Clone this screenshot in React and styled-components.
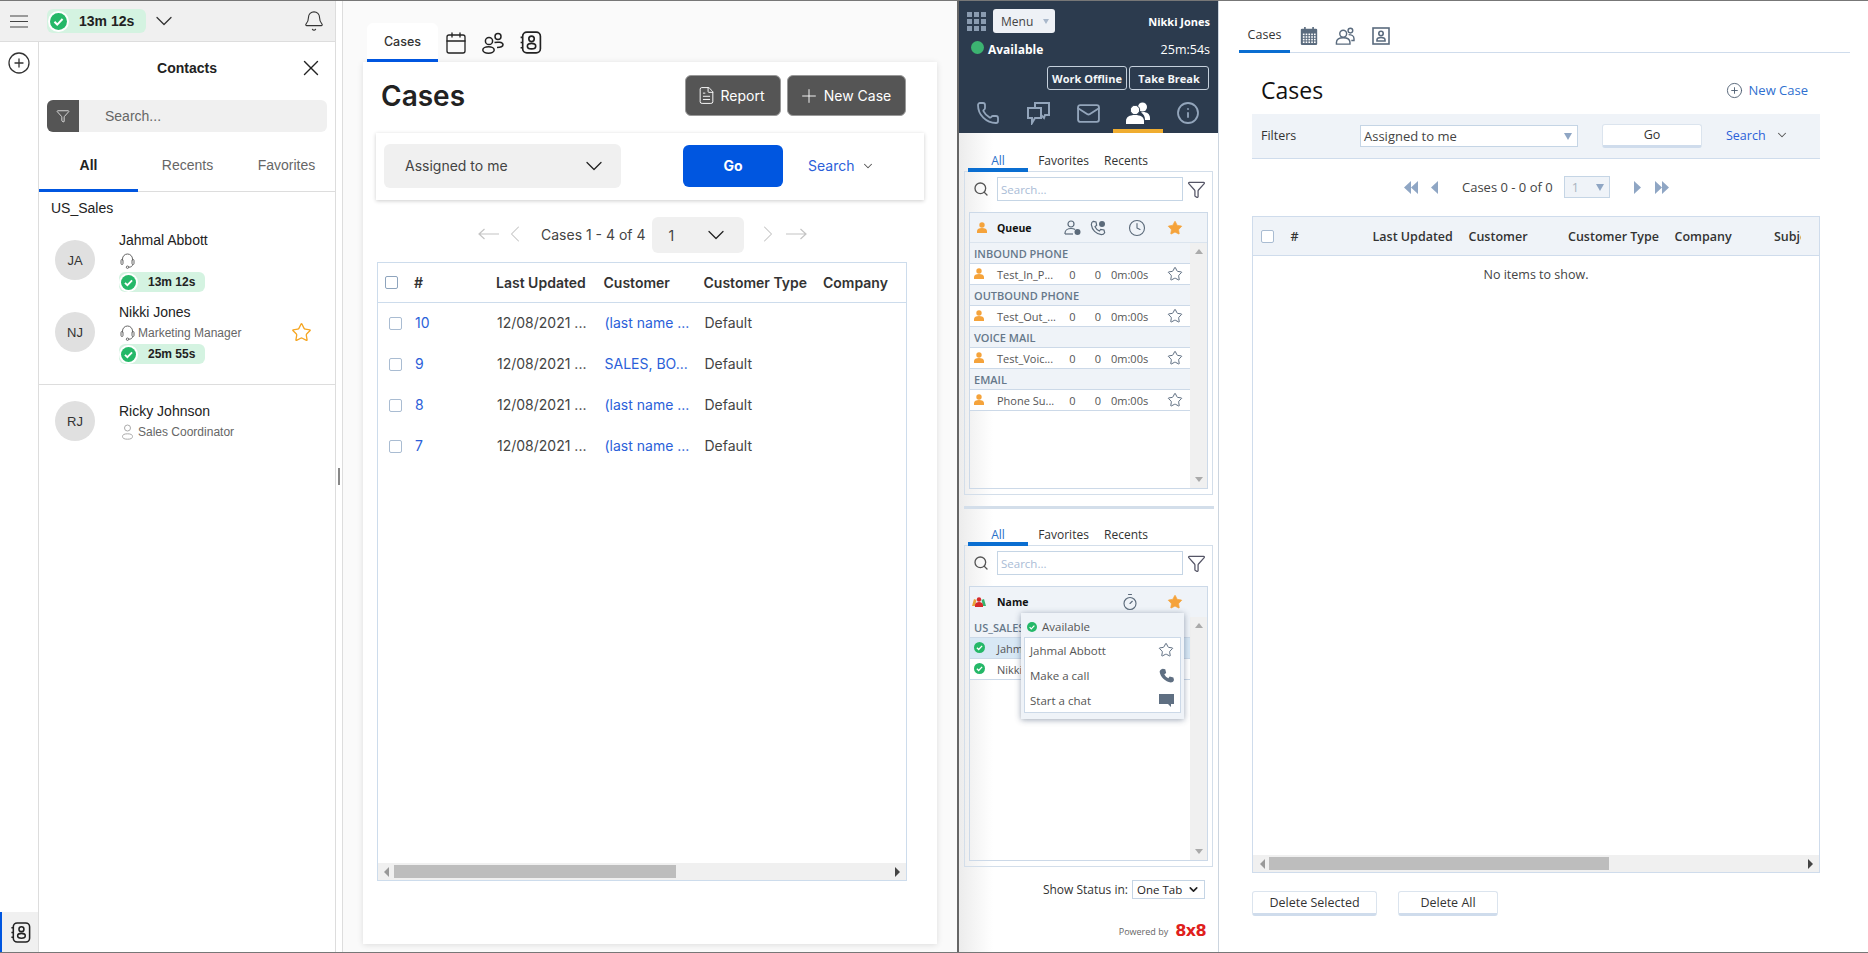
import React from "react";
import styled, { createGlobalStyle } from "styled-components";
import {
  ChevronDown,
  ChevronLeft,
  ChevronRight,
  Bell,
  CirclePlus,
  X,
  Funnel,
  Star,
  Calendar,
  FileText,
  Plus,
  Search as SearchIcon,
  Mail,
  Info,
  Phone,
  Clock,
  Timer,
} from "lucide-react";

const inter = `Inter, "Liberation Sans", sans-serif`;
const openSans = `"Open Sans", "Liberation Sans", sans-serif`;
const arial = `"Liberation Sans", Arial, sans-serif`;

const GlobalStyle = createGlobalStyle`
  html, body {
    margin: 0;
    padding: 0;
    background: #fff;
    overflow: hidden;
  }
  * {
    box-sizing: border-box;
  }
`;

const Page = styled.div`
  width: 1868px;
  height: 953px;
  display: flex;
  border-top: 1px solid #777;
  border-bottom: 1px solid #777;
  overflow: hidden;
  background: #fff;
`;

/* ---------- left contacts pane ---------- */

const LeftPane = styled.div`
  width: 336px;
  display: flex;
  flex-direction: column;
  border-right: 1px solid #ddd;
  font-family: ${arial};
  color: #222;
`;

const TopBar = styled.div`
  height: 41px;
  flex: none;
  display: flex;
  align-items: center;
  background: #f0f0f0;
  border-bottom: 1px solid #ddd;
  padding-left: 10px;
  color: #333;
`;

const Pill = styled.div`
  display: flex;
  align-items: center;
  background: #d4f3e1;
  border-radius: 6px;
  font-weight: bold;
  color: #222;
  overflow: hidden;
  width: ${(p) => (p.$small ? "86px" : "99px")};
  height: ${(p) => (p.$small ? "20px" : "24px")};
  font-size: ${(p) => (p.$small ? "12px" : "14px")};
  margin-left: ${(p) => (p.$small ? "0" : "19px")};
  margin-top: ${(p) => (p.$small ? "2px" : "0")};
  padding-left: ${(p) => (p.$small ? "2px" : "3px")};
`;

const PillCheck = styled.span`
  display: flex;
  border-radius: 50%;
  background: #fff;
  box-shadow: 0 0 0 2px #fff;
  margin-right: ${(p) => (p.$small ? "12px" : "12px")};
`;

const TopChevron = styled.span`
  display: flex;
  margin-left: 4px;
`;

const BellSlot = styled.div`
  margin-left: auto;
  margin-right: 10px;
  display: flex;
`;

const LeftBody = styled.div`
  flex: 1;
  display: flex;
  min-height: 0;
`;

const Rail = styled.div`
  width: 39px;
  flex: none;
  border-right: 1px solid #ddd;
  display: flex;
  flex-direction: column;
  align-items: center;
  padding-top: 9px;
`;

const RailFoot = styled.div`
  margin-top: auto;
  width: 100%;
  height: 40px;
  display: flex;
  align-items: center;
  justify-content: center;
  background: #f0f0f0;
  border-left: 2px solid #0056e0;
`;

const ContactsPanel = styled.div`
  flex: 1;
  min-width: 0;
`;

const ContactsHead = styled.div`
  height: 52px;
  display: flex;
  align-items: center;
  justify-content: center;
  position: relative;
  font-size: 14px;
  font-weight: bold;
`;

const CloseSlot = styled.div`
  position: absolute;
  right: 11px;
  top: 13px;
  display: flex;
`;

const SearchBox = styled.div`
  margin: 6px 0 0 8px;
  width: 280px;
  height: 32px;
  display: flex;
  border-radius: 6px;
  background: #f0f0f0;
  overflow: hidden;
`;

const FilterSquare = styled.div`
  width: 32px;
  display: flex;
  align-items: center;
  justify-content: center;
  background: #555;
  color: #fff;
`;

const SearchInput = styled.input`
  flex: 1;
  min-width: 0;
  border: none;
  background: transparent;
  padding: 0 0 0 26px;
  font-family: ${arial};
  font-size: 14px;
  outline: none;
  &::placeholder {
    color: #666;
    opacity: 1;
  }
`;

const ContactTabs = styled.div`
  margin-top: 13px;
  height: 47px;
  display: grid;
  grid-template-columns: repeat(3, 99px);
  border-bottom: 1px solid #ddd;
`;

const ContactTab = styled.div`
  display: flex;
  align-items: center;
  justify-content: center;
  font-size: 14px;
  padding-bottom: 5px;
  color: ${(p) => (p.$active ? "#222" : "#666")};
  font-weight: ${(p) => (p.$active ? "bold" : "normal")};
  border-bottom: 3px solid ${(p) => (p.$active ? "#0056e0" : "transparent")};
  margin-bottom: -1px;
`;

const GroupName = styled.div`
  font-size: 14px;
  line-height: 16px;
  padding: 8px 0 0 12px;
`;

const ContactRow = styled.div`
  display: flex;
  padding-left: 16px;
  margin-top: ${(p) => p.$top || 12}px;
`;

const Avatar = styled.div`
  width: 40px;
  height: 40px;
  flex: none;
  border-radius: 50%;
  background: #e0e0e0;
  display: flex;
  align-items: center;
  justify-content: center;
  font-size: 13px;
  color: #333;
  margin-top: ${(p) => (p.$compact ? "-2px" : "8px")};
`;

const ContactInfo = styled.div`
  margin-left: 24px;
`;

const ContactName = styled.div`
  font-size: 14px;
  line-height: 16px;
`;

const ContactMeta = styled.div`
  height: 20px;
  margin-top: ${(p) => (p.$compact ? "2px" : "2px")};
  padding-top: 2px;
  display: flex;
  align-items: center;
  gap: 3px;
  padding-left: 1px;
  font-size: 12px;
  color: #666;
`;

const FavSlot = styled.div`
  margin-left: auto;
  margin-right: 23px;
  margin-top: 18px;
  display: flex;
  color: #f5a623;
`;

const ContactDivider = styled.div`
  margin-top: 20px;
  height: 1px;
  background: #ddd;
`;

/* ---------- splitter ---------- */

const Splitter = styled.div`
  width: 7px;
  flex: none;
  display: flex;
  align-items: center;
  padding-left: 2px;
  border-right: 1px solid #ddd;
`;

const Grip = styled.div`
  width: 2px;
  height: 17px;
  background: #888;
`;

/* ---------- modern cases pane ---------- */

const CasesPane = styled.div`
  width: 616px;
  flex: none;
  background: #fafafa;
  border-right: 2px solid #666;
  font-family: ${inter};
  color: #333;
  padding-left: 20px;
`;

const PaneTabs = styled.div`
  height: 61px;
  padding: 22px 0 0 4px;
  display: flex;
  align-items: flex-start;
`;

const PaneTab = styled.div`
  width: 71px;
  height: 39px;
  padding-top: 1px;
  background: #fff;
  border-radius: 6px 6px 0 0;
  border-bottom: 3px solid #0056e0;
  display: flex;
  align-items: center;
  justify-content: center;
  font-size: 12.5px;
  font-weight: 500;
  color: #333;
`;

const PaneTabIcons = styled.div`
  display: flex;
  align-items: center;
  gap: 13px;
  margin: 7px 0 0 6px;
  color: #222;
`;

const Card = styled.div`
  width: 574px;
  height: 882px;
  background: #fff;
  box-shadow: 0 1px 6px rgba(0, 0, 0, 0.12);
  padding-top: 13px;
`;

const CardHead = styled.div`
  height: 41px;
  margin-left: 18px;
  width: 525px;
  display: flex;
  align-items: center;
`;

const CardTitle = styled.div`
  font-size: 28px;
  font-weight: 600;
  color: #222;
  margin-right: auto;
`;

const DarkButton = styled.div`
  height: 41px;
  width: ${(p) => p.$w}px;
  margin-left: 6px;
  padding-right: 4px;
  display: flex;
  align-items: center;
  justify-content: center;
  gap: 4px;
  background: #555;
  border: 1px solid #999;
  border-radius: 6px;
  color: #fff;
  font-size: 14px;
`;

const FilterCard = styled.div`
  margin: 17px 0 0 13px;
  width: 548px;
  height: 67px;
  padding-bottom: 2px;
  display: flex;
  align-items: center;
  background: #fff;
  box-shadow: 0 1px 4px rgba(0, 0, 0, 0.2);
`;

const SoftSelect = styled.div`
  margin-left: ${(p) => p.$ml || 0}px;
  width: ${(p) => p.$w}px;
  height: ${(p) => p.$h}px;
  display: flex;
  align-items: center;
  justify-content: space-between;
  padding: 0 ${(p) => p.$pr || 13}px 0 ${(p) => p.$pl || 21}px;
  background: #f0f0f0;
  border-radius: 6px;
  font-size: 14px;
  color: #444;
`;

const GoButton = styled.div`
  margin-left: 62px;
  width: 100px;
  height: 42px;
  display: flex;
  align-items: center;
  justify-content: center;
  background: #0056e0;
  border-radius: 6px;
  color: #fff;
  font-size: 14px;
  font-weight: 700;
`;

const BlueLink = styled.div`
  margin-left: ${(p) => p.$ml}px;
  margin-top: ${(p) => p.$mt || 0}px;
  display: flex;
  align-items: center;
  gap: ${(p) => p.$gap || 7}px;
  color: #2b5fd9;
  font-size: ${(p) => p.$size || 14}px;
`;

const Pager = styled.div`
  margin: 17px 0 0 115px;
  height: 36px;
  display: flex;
  align-items: center;
  font-size: 14px;
  color: #444;
`;

const PagerIcon = styled.span`
  display: flex;
  margin-left: ${(p) => p.$ml || 0}px;
  margin-top: -3px;
  color: #c4c4c4;
`;

const PagerText = styled.span`
  margin-left: ${(p) => p.$ml}px;
  margin-top: ${(p) => p.$mt || 0}px;
  white-space: nowrap;
`;

const CasesTable = styled.div`
  margin: 9px 0 0 14px;
  width: 530px;
  height: 619px;
  border: 1px solid #cddcec;
  display: flex;
  flex-direction: column;
`;

const casesColumns = "36px 82px 107.5px 100px 119.5px 1fr";

const CasesHeadRow = styled.div`
  height: 40px;
  flex: none;
  display: grid;
  grid-template-columns: ${casesColumns};
  align-items: center;
  border-bottom: 1px solid #cddcec;
  font-size: 14px;
  font-weight: 600;
  color: #333;
  white-space: nowrap;
`;

const CasesRow = styled.div`
  height: 41px;
  flex: none;
  display: grid;
  grid-template-columns: ${casesColumns};
  align-items: center;
  font-size: 14px;
  color: #444;
  white-space: nowrap;
`;

const Check = styled.span`
  display: block;
  width: 13px;
  height: 13px;
  background: #fff;
  border: 1px solid ${(p) => p.$color || "#a9bcd2"};
  border-radius: 2px;
  margin-left: ${(p) => p.$ml}px;
`;

const CaseCell = styled.span`
  margin: -2px 0 0 1px;
  color: ${(p) => (p.$link ? "#2b5fd9" : "inherit")};
`;

const TableFill = styled.div`
  flex: 1;
`;

const HScroll = styled.div`
  height: ${(p) => p.$h}px;
  flex: none;
  display: flex;
  align-items: center;
  background: #f0f0f0;
  padding-left: ${(p) => p.$pl}px;
`;

const HThumb = styled.div`
  width: ${(p) => p.$w}px;
  height: 13px;
  margin-left: ${(p) => p.$ml}px;
  margin-right: auto;
  background: #bdbdbd;
`;

const Tri = styled.span`
  width: 0;
  height: 0;
  border-top: 5px solid transparent;
  border-bottom: 5px solid transparent;
  border-right: ${(p) => (p.$left ? "5px solid #999" : "0")};
  border-left: ${(p) => (p.$left ? "0" : "5px solid #444")};
  margin-right: ${(p) => p.$mr || 0}px;
`;

/* ---------- agent sidecar ---------- */

const Sidecar = styled.div`
  width: 260px;
  flex: none;
  display: flex;
  flex-direction: column;
  border-right: 1px solid #ccd5df;
  font-family: ${openSans};
  color: #333;
  background: linear-gradient(90deg, #ececec, #fff 34px);
`;

const AgentHeader = styled.div`
  height: 132px;
  flex: none;
  background: #2c3b4e;
  color: #fff;
`;

const AgentTop = styled.div`
  display: flex;
  align-items: center;
  padding: 8px 8px 0 8px;
`;

const DotGrid = styled.div`
  display: grid;
  grid-template-columns: repeat(3, 5px);
  gap: 2px;
  margin-right: 7px;
  width: 19px;
`;

const Dot = styled.span`
  width: 5px;
  height: 5px;
  background: #8a9bb0;
`;

const MenuButton = styled.div`
  width: 62px;
  height: 24px;
  display: flex;
  align-items: center;
  justify-content: space-between;
  padding: 0 6px 0 8px;
  background: #eef1f6;
  border-radius: 3px;
  color: #444;
  font-size: 12px;
`;

const MenuCaret = styled.span`
  width: 0;
  height: 0;
  border-left: 3px solid transparent;
  border-right: 3px solid transparent;
  border-top: 5px solid #a9b8cb;
`;

const AgentName = styled.div`
  margin-left: auto;
  font-size: 11px;
  font-weight: 700;
`;

const AgentStatus = styled.div`
  margin-top: 8px;
  height: 16px;
  display: flex;
  align-items: center;
  padding: 0 8px 0 12px;
  font-size: 12.5px;
`;

const StatusDot = styled.span`
  width: 13px;
  height: 13px;
  border-radius: 50%;
  background: #3cb371;
  margin: -3px 4px 0 0;
`;

const StatusLabel = styled.span`
  font-size: 12px;
  font-weight: 700;
  margin-right: auto;
`;

const AgentActions = styled.div`
  margin-top: 9px;
  display: flex;
  justify-content: flex-end;
  gap: 2px;
  padding-right: 9px;
`;

const OutlineButton = styled.div`
  width: 80px;
  height: 24px;
  display: flex;
  align-items: center;
  justify-content: center;
  border: 1px solid #c5d0dc;
  border-radius: 3px;
  font-size: 11px;
  font-weight: 700;
  color: #f4f6f8;
`;

const AgentNav = styled.div`
  margin-left: 4px;
  display: grid;
  grid-template-columns: repeat(5, 50px);
`;

const AgentNavItem = styled.div`
  height: 43px;
  padding-top: 7px;
  display: flex;
  align-items: center;
  justify-content: center;
  color: ${(p) => (p.$active ? "#fff" : "#93a5bb")};
  border-bottom: 4px solid ${(p) => (p.$active ? "#f0ad30" : "transparent")};
`;

const SideTabs = styled.div`
  margin: ${(p) => p.$mt}px 0 -1px 9px;
  height: 23px;
  flex: none;
  display: flex;
  position: relative;
`;

const SideTab = styled.div`
  width: ${(p) => p.$w}px;
  padding-top: 4px;
  display: flex;
  align-items: flex-start;
  justify-content: center;
  font-size: 12px;
  line-height: 16px;
  color: ${(p) => (p.$active ? "#2a6fc9" : "#333")};
  border-bottom: ${(p) => (p.$active ? "4px solid #0a6ed1" : "0")};
`;

const SideBox = styled.div`
  margin-left: 5px;
  width: 249px;
  height: ${(p) => p.$h}px;
  flex: none;
  border: 1px solid #d3deea;
  display: flex;
  flex-direction: column;
  padding: 5px 4px 5px 4px;
`;

const SideDivider = styled.div`
  margin: 11px 0 0 5px;
  width: 250px;
  height: 3px;
  flex: none;
  background: #d3deea;
`;

const SideSearchRow = styled.div`
  display: flex;
  align-items: center;
  height: 24px;
  flex: none;
  color: #555;
  padding-left: 4px;
`;

const SideInput = styled.input`
  margin-left: 8px;
  width: 186px;
  height: 24px;
  border: 1px solid #c5d5e5;
  padding: 0 0 0 3px;
  font-family: ${openSans};
  font-size: 11.5px;
  background: #fff;
  outline: none;
  &::placeholder {
    color: #a9bcd6;
    opacity: 1;
  }
`;

const SideFunnel = styled.span`
  display: flex;
  margin-left: 4px;
  color: #556;
`;

const SideList = styled.div`
  position: relative;
  flex: 1;
  min-height: 0;
  margin-top: 11px;
  border: 1px solid #ccd9e8;
  display: flex;
  flex-direction: column;
`;

const listColumns = "27px 63px 25px 26px 52px 24px";

const ListHead = styled.div`
  height: 30px;
  flex: none;
  display: grid;
  grid-template-columns: ${listColumns};
  align-items: center;
  background: #eff3f8;
  font-size: 10.5px;
  font-weight: 700;
  color: #111;
  border-bottom: ${(p) => (p.$plain ? "0" : "1px solid #dbe4ee")};
`;

const HeadCell = styled.span`
  display: flex;
  justify-content: center;
  color: #5b6a7a;
  margin-right: ${(p) => p.$mr || 0}px;
`;

const HeadIcon = styled.span`
  display: flex;
  padding-left: ${(p) => p.$pl || 7}px;
`;

const HeadStar = styled.span`
  display: flex;
  justify-content: center;
  color: #f5a33b;
`;

const ListBody = styled.div`
  flex: 1;
  min-height: 0;
  display: flex;
`;

const ListRows = styled.div`
  flex: 1;
  min-width: 0;
`;

const VScroll = styled.div`
  width: 17px;
  flex: none;
  background: #f0f0f0;
  display: flex;
  flex-direction: column;
  align-items: center;
  justify-content: space-between;
  padding: 6px 0;
`;

const VArrow = styled.span`
  width: 0;
  height: 0;
  border-left: 4px solid transparent;
  border-right: 4px solid transparent;
  border-bottom: ${(p) => (p.$up ? "5px solid #aaa" : "0")};
  border-top: ${(p) => (p.$up ? "0" : "5px solid #aaa")};
`;

const GroupRow = styled.div`
  height: 21px;
  display: flex;
  align-items: center;
  padding-left: 4px;
  background: #eff3f8;
  border-bottom: 1px solid #ccd9e8;
  font-size: 11px;
  font-weight: 600;
  color: #66788a;
  white-space: nowrap;
  overflow: hidden;
`;

const ListRow = styled.div`
  height: 21px;
  display: grid;
  grid-template-columns: ${listColumns};
  align-items: center;
  background: ${(p) => (p.$selected ? "#d8e8f5" : "#fff")};
  border-bottom: 1px solid #ccd9e8;
  font-size: 11px;
  color: #555;
  white-space: nowrap;
`;

const NumCell = styled.span`
  text-align: center;
`;

const RowIcon = styled.span`
  display: flex;
  padding-left: 4px;
  margin-top: -2px;
`;

const RowStar = styled.span`
  display: flex;
  justify-content: center;
  color: #5f6f82;
`;

const Popover = styled.div`
  position: absolute;
  left: 51px;
  top: 26px;
  width: 163px;
  height: 106px;
  background: #eff3f8;
  box-shadow: 0 1px 6px rgba(40, 60, 90, 0.45);
  padding: 3px;
  color: #555;
  font-size: 11.5px;
`;

const PopoverHead = styled.div`
  height: 21px;
  display: flex;
  align-items: center;
  gap: 5px;
  padding-left: 3px;
  font-weight: 500;
`;

const PopoverMenu = styled.div`
  height: 76px;
  background: #fff;
  border: 1px solid #ccd9e8;
  display: flex;
  flex-direction: column;
  justify-content: center;
`;

const PopoverItem = styled.div`
  height: 25px;
  flex: none;
  display: flex;
  align-items: center;
  justify-content: space-between;
  padding: 0 6px 0 5px;
  color: #555;
`;

const PopoverGlyph = styled.span`
  display: flex;
  color: #5f6f82;
`;

const StatusRow = styled.div`
  margin-top: 13px;
  height: 19px;
  flex: none;
  display: flex;
  align-items: center;
  justify-content: flex-end;
  padding-right: 13px;
  font-size: 12px;
  color: #333;
`;

const TinySelect = styled.div`
  width: 73px;
  height: 19px;
  margin-left: 4px;
  display: flex;
  align-items: center;
  justify-content: space-between;
  padding: 0 4px 0 4px;
  border: 1px solid #c5d5e5;
  font-size: 11.5px;
  color: #222;
`;

const PoweredRow = styled.div`
  margin-top: 24px;
  height: 16px;
  flex: none;
  display: flex;
  align-items: center;
  justify-content: flex-end;
  padding-right: 12px;
  gap: 7px;
  font-size: 9px;
  color: #666;
`;

const EightByEight = styled.span`
  font-family: "DejaVu Sans", ${arial};
  font-size: 16px;
  line-height: 16px;
  font-weight: bold;
  letter-spacing: -0.6px;
  color: #e0201c;
`;

/* ---------- classic cases pane ---------- */

const ClassicPane = styled.div`
  flex: 1;
  min-width: 0;
  background: #fff;
  font-family: ${openSans};
  color: #333;
`;

const ClassicTabs = styled.div`
  margin-left: 20px;
  width: 611px;
  height: 52px;
  display: flex;
  align-items: flex-end;
  border-bottom: 1px solid #cfdcec;
`;

const ClassicTab = styled.div`
  width: 51px;
  height: 30px;
  margin-bottom: -1px;
  display: flex;
  align-items: flex-start;
  justify-content: center;
  font-size: 12.5px;
  line-height: 16px;
  padding-top: 4px;
  border-bottom: 3px solid #0a6ed1;
`;

const ClassicIcons = styled.div`
  display: flex;
  align-items: center;
  gap: 17px;
  margin: 0 0 7px 10px;
  align-self: flex-end;
  color: #5a6b7e;
`;

const ClassicTitleRow = styled.div`
  margin: 22px 0 0 42px;
  width: 547px;
  height: 30px;
  display: flex;
  align-items: center;
  justify-content: space-between;
`;

const ClassicTitle = styled.div`
  font-size: 23px;
  color: #111;
`;

const ClassicLink = styled.div`
  display: flex;
  align-items: center;
  gap: 6px;
  font-size: 13px;
  color: #2f6fd0;
`;

const LinkIcon = styled.span`
  display: flex;
  color: #4f5f72;
`;

const ClassicFilters = styled.div`
  margin: 9px 0 0 33px;
  width: 568px;
  height: 45px;
  display: flex;
  align-items: center;
  background: #eff3f8;
  border-bottom: 1px solid #cfdcec;
  font-size: 12.5px;
`;

const FiltersLabel = styled.div`
  width: 108px;
  padding-left: 9px;
  margin-top: -2px;
`;

const ClassicSelect = styled.div`
  width: 218px;
  height: 22px;
  display: flex;
  align-items: center;
  justify-content: space-between;
  padding: 0 5px 0 3px;
  background: #fff;
  border: 1px solid #c5d5e5;
  font-size: 13px;
  color: #444;
`;

const SolidCaret = styled.span`
  width: 0;
  height: 0;
  border-left: 4.5px solid transparent;
  border-right: 4.5px solid transparent;
  border-top: 7px solid ${(p) => p.$color || "#8fa6c4"};
`;

const ClassicButton = styled.div`
  margin-left: ${(p) => p.$ml}px;
  margin-top: ${(p) => p.$mt || 0}px;
  width: ${(p) => p.$w}px;
  height: ${(p) => p.$h}px;
  display: flex;
  align-items: center;
  justify-content: center;
  background: #fff;
  border: 1px solid #dbe4ee;
  border-bottom: 3px solid #cfdcec;
  border-radius: 3px;
  font-size: 12.5px;
  color: #333;
`;

const ClassicPager = styled.div`
  margin: 17px 0 0 185px;
  height: 22px;
  display: flex;
  align-items: center;
  font-size: 13px;
  color: #444;
`;

const Double = styled.span`
  display: flex;
  color: #8fa6c4;
  margin-left: ${(p) => p.$ml || 0}px;
`;

const PagerSelect = styled.div`
  margin-left: 11px;
  width: 46px;
  height: 22px;
  display: flex;
  align-items: center;
  justify-content: space-between;
  padding: 0 5px 0 7px;
  background: #eff3f8;
  border: 1px solid #c5d5e5;
  color: #a9b4c0;
  font-size: 12.5px;
`;

const ClassicTable = styled.div`
  margin: 18px 0 0 33px;
  width: 568px;
  height: 657px;
  border: 1px solid #cfdcec;
  display: flex;
  flex-direction: column;
`;

const ClassicHeadRow = styled.div`
  height: 39px;
  flex: none;
  display: grid;
  grid-template-columns: 37.5px 82px 96px 99.5px 106.5px 99.5px 1fr;
  padding-right: 18px;
  align-items: center;
  background: #eff3f8;
  border-bottom: 1px solid #cfdcec;
  font-size: 12.5px;
  font-weight: 600;
  white-space: nowrap;
`;

const ClipCell = styled.span`
  overflow: hidden;
`;

const NoItems = styled.div`
  flex: 1;
  padding-top: 10px;
  text-align: center;
  font-size: 12.5px;
  line-height: 18px;
  color: #444;
`;

const ClassicActions = styled.div`
  margin: 18px 0 0 33px;
  display: flex;
`;

/* ---------- drawn icons ---------- */

function Hamburger() {
  return (
    <svg width="18" height="13" viewBox="0 0 18 13" fill="none" stroke="#444" strokeWidth="1.100">
      <path d="M0 1h18M0 6.500h18M0 12h18" />
    </svg>
  );
}

function StatusCheck({ size = 16 }) {
  return (
    <svg width={size} height={size} viewBox="0 0 16 16">
      <circle cx="8" cy="8" r="8" fill="#25b868" />
      <path d="M4.200 8.300l2.600 2.600 5-5.200" fill="none" stroke="#fff" strokeWidth="1.900" />
    </svg>
  );
}

function ContactBook({ size = 22, color = "#222" }) {
  return (
    <svg width={size} height={size} viewBox="0 0 24 24" fill="none" stroke={color} strokeWidth="1.600">
      <rect x="4.500" y="2" width="17" height="20" rx="4" />
      <path d="M2.500 7h2M2.500 12h2M2.500 17h2" />
      <circle cx="13" cy="8.500" r="2.600" />
      <ellipse cx="13" cy="15.500" rx="4" ry="2.600" />
    </svg>
  );
}

function PeopleOutline({ size = 24 }) {
  return (
    <svg width={size} height={size} viewBox="0 0 24 24" fill="none" stroke="currentColor" strokeWidth="1.500">
      <circle cx="8" cy="10" r="3.600" />
      <circle cx="17" cy="5.500" r="3" />
      <ellipse cx="7.500" cy="19" rx="5.700" ry="3.200" />
      <path d="M13.500 11.500c3-.6 8-.6 8.500 2 .3 2-2.500 3-6 3" />
    </svg>
  );
}

function Headset({ color = "#666" }) {
  return (
    <svg width="15" height="16" viewBox="0 0 15 16" fill="none" stroke={color} strokeWidth="1">
      <path d="M2.500 7.500V6a5 5 0 0 1 10 0v1.500" />
      <rect x="1" y="6.500" width="2" height="5" rx="1" />
      <rect x="12" y="6.500" width="2" height="5" rx="1" />
      <path d="M12.500 11.500c0 2-1.500 2.700-4 2.700" />
      <circle cx="7.500" cy="14.200" r="1.200" />
    </svg>
  );
}

function PersonOutline() {
  return (
    <svg width="15" height="16" viewBox="0 0 15 16" fill="none" stroke="#aaa" strokeWidth="1">
      <circle cx="7.500" cy="4" r="3" />
      <ellipse cx="7.500" cy="12.500" rx="5" ry="2.700" />
    </svg>
  );
}

function PersonSolid() {
  return (
    <svg width="10" height="11" viewBox="0 0 10 11" fill="#f5a33b">
      <circle cx="5" cy="3" r="2.700" />
      <path d="M0 11V9c0-2 2-3 5-3s5 1 5 3v2z" />
    </svg>
  );
}

function ChatOutline() {
  return (
    <svg width="24" height="24" viewBox="0 0 24 24" fill="none" stroke="currentColor" strokeWidth="2">
      <path d="M9 7V2h14v12h-4l-1 3-3-3" />
      <path d="M2 7h13v10H9l-3 5v-5H2z" />
    </svg>
  );
}

function PeopleSolid() {
  return (
    <svg width="24" height="22" viewBox="0 0 24 22" fill="#fff">
      <circle cx="16.500" cy="5" r="4.500" />
      <path d="M17 10c4 0 7 2 7 6v2h-5c0-3-1-6-4-7.500z" />
      <circle cx="9" cy="8" r="4.700" stroke="#2c3b4e" strokeWidth="1" />
      <path d="M0 22v-3c0-4 3.500-6 9-6s9 2 9 6v3z" />
    </svg>
  );
}

function QueueAgent() {
  return (
    <svg width="18" height="16" viewBox="0 0 18 16" fill="none" stroke="currentColor" strokeWidth="1.200">
      <circle cx="7" cy="4" r="3" />
      <path d="M1 14v-1c0-3 3-4.500 6-4.500 1.500 0 3 .3 4 1" />
      <path d="M1 14h8" />
      <circle cx="13.500" cy="12" r="3" fill="currentColor" stroke="none" />
    </svg>
  );
}

function PhoneClock() {
  return (
    <svg width="16" height="16" viewBox="0 0 24 24" fill="none" stroke="currentColor" strokeWidth="1.800">
      <path d="M5 2l4 1 1 5-2.500 2c1.500 3 3.500 5 6.500 6.500L16 14l5 1 1 4c-1 2-3 3-5 3C9 21 3 15 2 7c0-2 1-4 3-5z" />
      <circle cx="18" cy="6" r="4.500" fill="currentColor" stroke="none" />
    </svg>
  );
}

function TeamAlert() {
  return (
    <svg width="14" height="12" viewBox="0 0 14 12">
      <path d="M0 10l2-7 2.500 1L3 10z" fill="#e8a33a" />
      <path d="M14 10l-2-7-2.500 1L11 10z" fill="#37b26c" />
      <circle cx="7" cy="3.500" r="2.200" fill="#d62b2b" />
      <path d="M3 11V9c0-2 2-3 4-3s4 1 4 3v2z" fill="#d62b2b" />
    </svg>
  );
}

function ChatSolid() {
  return (
    <svg width="15" height="15" viewBox="0 0 15 15" fill="currentColor">
      <path d="M0 1h15v10h-3v3l-3-3H0z" />
    </svg>
  );
}

function PhoneSolid() {
  return (
    <svg width="15" height="15" viewBox="0 0 24 24" fill="currentColor">
      <path d="M6 1l4 1 1.500 6-3 2c1.500 3 3.500 5 6.500 6.500l2-3 6 1.500 1 4c-1 3-3 4-5 4C10 22 2 14 1 6c0-2 2-4 5-5z" />
    </svg>
  );
}

function ArrowLine({ dir }) {
  return (
    <svg width="21" height="14" viewBox="0 0 21 14" fill="none" stroke="currentColor" strokeWidth="1.200">
      {dir === "left" ? <path d="M21 7H1M6.500 2L1 7l5.500 5" /> : <path d="M0 7h20M14.500 2L20 7l-5.500 5" />}
    </svg>
  );
}

function ClassicCalendar() {
  const dots = [];
  for (let r = 0; r < 4; r++) {
    for (let c = 0; c < 5; c++) {
      dots.push(<rect key={r + "-" + c} x={3.500 + c * 3.400} y={8 + r * 3.200} width="2" height="2" fill="#fff" />);
    }
  }
  return (
    <svg width="18" height="18" viewBox="0 0 22 22">
      <rect x="1" y="2" width="20" height="20" rx="1.500" fill="#5a6b7e" />
      <path d="M6 0v4M16 0v4" stroke="#5a6b7e" strokeWidth="2" />
      {dots}
    </svg>
  );
}

function ClassicPeople() {
  return (
    <svg width="20" height="18" viewBox="0 0 22 20" fill="none" stroke="#5a6b7e" strokeWidth="1.600">
      <circle cx="9" cy="7.500" r="3.800" />
      <path d="M1.500 19v-2c0-3.200 3-5 7.500-5s7.500 1.800 7.500 5v2z" />
      <circle cx="17" cy="4" r="2.600" />
      <path d="M15 8.500c3 0 6 1.500 6 4.500v2h-3" />
    </svg>
  );
}

function ClassicContact() {
  return (
    <svg width="18" height="18" viewBox="0 0 18 18" fill="none" stroke="#5a6b7e" strokeWidth="1.600">
      <rect x="1" y="1" width="16" height="16" />
      <circle cx="9" cy="6.500" r="2.200" />
      <path d="M5 14v-1.200c0-1.300 1.800-2.300 4-2.300s4 1 4 2.300V14z" />
    </svg>
  );
}

function DoubleArrow({ dir }) {
  return (
    <svg width="14" height="13" viewBox="0 0 14 13" fill="currentColor">
      {dir === "left" ? <path d="M7 0v13L0 6.500zM14 0v13L7 6.500z" /> : <path d="M0 0v13l7-6.500zM7 0v13l7-6.500z" />}
    </svg>
  );
}

function SingleArrow({ dir }) {
  return (
    <svg width="7" height="13" viewBox="0 0 7 13" fill="currentColor">
      {dir === "left" ? <path d="M7 0v13L0 6.500z" /> : <path d="M0 0v13l7-6.500z" />}
    </svg>
  );
}

/* ---------- data ---------- */

const caseRows = [
  { id: 10, customer: "(last name ..." },
  { id: 9, customer: "SALES, BO..." },
  { id: 8, customer: "(last name ..." },
  { id: 7, customer: "(last name ..." },
];

const queues = [
  { group: "INBOUND PHONE", name: "Test_In_P..." },
  { group: "OUTBOUND PHONE", name: "Test_Out_..." },
  { group: "VOICE MAIL", name: "Test_Voic..." },
  { group: "EMAIL", name: "Phone Su..." },
];

function Contacts() {
  return (
    <LeftPane>
      <TopBar>
        <Hamburger />
        <Pill>
          <PillCheck>
            <StatusCheck size={17} />
          </PillCheck>
          13m 12s
        </Pill>
        <TopChevron>
          <ChevronDown size={28} strokeWidth={1.1} />
        </TopChevron>
        <BellSlot>
          <Bell size={22} strokeWidth={1.2} />
        </BellSlot>
      </TopBar>
      <LeftBody>
        <Rail>
          <CirclePlus size={24} strokeWidth={1.3} color="#333" />
          <RailFoot>
            <ContactBook size={23} />
          </RailFoot>
        </Rail>
        <ContactsPanel>
          <ContactsHead>
            Contacts
            <CloseSlot>
              <X size={26} strokeWidth={1.3} color="#222" />
            </CloseSlot>
          </ContactsHead>
          <SearchBox>
            <FilterSquare>
              <Funnel size={14} strokeWidth={1.3} />
            </FilterSquare>
            <SearchInput placeholder="Search..." readOnly />
          </SearchBox>
          <ContactTabs>
            <ContactTab $active>All</ContactTab>
            <ContactTab>Recents</ContactTab>
            <ContactTab>Favorites</ContactTab>
          </ContactTabs>
          <GroupName>US_Sales</GroupName>
          <ContactRow $top={16}>
            <Avatar>JA</Avatar>
            <ContactInfo>
              <ContactName>Jahmal Abbott</ContactName>
              <ContactMeta>
                <Headset />
              </ContactMeta>
              <Pill $small>
                <PillCheck $small>
                  <StatusCheck size={15} />
                </PillCheck>
                13m 12s
              </Pill>
            </ContactInfo>
          </ContactRow>
          <ContactRow>
            <Avatar>NJ</Avatar>
            <ContactInfo>
              <ContactName>Nikki Jones</ContactName>
              <ContactMeta>
                <Headset />
                Marketing Manager
              </ContactMeta>
              <Pill $small>
                <PillCheck $small>
                  <StatusCheck size={15} />
                </PillCheck>
                25m 55s
              </Pill>
            </ContactInfo>
            <FavSlot>
              <Star size={21} strokeWidth={1.5} />
            </FavSlot>
          </ContactRow>
          <ContactDivider />
          <ContactRow $top={18}>
            <Avatar $compact>RJ</Avatar>
            <ContactInfo>
              <ContactName>Ricky Johnson</ContactName>
              <ContactMeta $compact>
                <PersonOutline />
                Sales Coordinator
              </ContactMeta>
            </ContactInfo>
          </ContactRow>
        </ContactsPanel>
      </LeftBody>
    </LeftPane>
  );
}

function ModernCases() {
  return (
    <CasesPane>
      <PaneTabs>
        <PaneTab>Cases</PaneTab>
        <PaneTabIcons>
          <Calendar size={24} strokeWidth={1.3} />
          <PeopleOutline size={24} />
          <ContactBook size={25} />
        </PaneTabIcons>
      </PaneTabs>
      <Card>
        <CardHead>
          <CardTitle>Cases</CardTitle>
          <DarkButton $w={96}>
            <FileText size={19} strokeWidth={1.2} />
            Report
          </DarkButton>
          <DarkButton $w={119}>
            <Plus size={22} strokeWidth={1} />
            New Case
          </DarkButton>
        </CardHead>
        <FilterCard>
          <SoftSelect $ml={8} $w={237} $h={44}>
            Assigned to me
            <ChevronDown size={28} strokeWidth={1.1} color="#222" />
          </SoftSelect>
          <GoButton>Go</GoButton>
          <BlueLink $ml={25}>
            Search
            <ChevronDown size={14} strokeWidth={1.8} color="#555" />
          </BlueLink>
        </FilterCard>
        <Pager>
          <PagerIcon>
            <ArrowLine dir="left" />
          </PagerIcon>
          <PagerIcon $ml={2}>
            <ChevronLeft size={28} strokeWidth={0.9} />
          </PagerIcon>
          <PagerText $ml={12} $mt={-2}>
            Cases 1 - 4 of 4
          </PagerText>
          <SoftSelect $ml={6} $w={92} $h={36} $pr={14} $pl={17}>
            1
            <ChevronDown size={28} strokeWidth={1.1} color="#222" />
          </SoftSelect>
          <PagerIcon $ml={10}>
            <ChevronRight size={28} strokeWidth={0.9} />
          </PagerIcon>
          <PagerIcon $ml={4}>
            <ArrowLine dir="right" />
          </PagerIcon>
        </Pager>
        <CasesTable>
          <CasesHeadRow>
            <Check $ml={7} $color="#8ea4bd" />
            <span>#</span>
            <span>Last Updated</span>
            <span>Customer</span>
            <span>Customer Type</span>
            <span>Company</span>
          </CasesHeadRow>
          {caseRows.map((row) => (
            <CasesRow key={row.id}>
              <Check $ml={11} />
              <CaseCell $link>{row.id}</CaseCell>
              <CaseCell>12/08/2021 ...</CaseCell>
              <CaseCell $link>{row.customer}</CaseCell>
              <CaseCell>Default</CaseCell>
              <span />
            </CasesRow>
          ))}
          <TableFill />
          <HScroll $h={17} $pl={6}>
            <Tri $left />
            <HThumb $w={282} $ml={5} />
            <Tri $mr={6} />
          </HScroll>
        </CasesTable>
      </Card>
    </CasesPane>
  );
}

function SideTabStrip({ top }) {
  return (
    <SideTabs $mt={top}>
      <SideTab $active $w={60}>
        All
      </SideTab>
      <SideTab $w={71}>Favorites</SideTab>
      <SideTab $w={54}>Recents</SideTab>
    </SideTabs>
  );
}

function SideSearch() {
  return (
    <SideSearchRow>
      <SearchIcon size={16} strokeWidth={2} />
      <SideInput placeholder="Search..." readOnly />
      <SideFunnel>
        <Funnel size={19} strokeWidth={1.6} />
      </SideFunnel>
    </SideSearchRow>
  );
}

function Agent() {
  return (
    <Sidecar>
      <AgentHeader>
        <AgentTop>
          <DotGrid>
            {Array.from({ length: 9 }, (_, i) => (
              <Dot key={i} />
            ))}
          </DotGrid>
          <MenuButton>
            Menu
            <MenuCaret />
          </MenuButton>
          <AgentName>Nikki Jones</AgentName>
        </AgentTop>
        <AgentStatus>
          <StatusDot />
          <StatusLabel>Available</StatusLabel>
          25m:54s
        </AgentStatus>
        <AgentActions>
          <OutlineButton>Work Offline</OutlineButton>
          <OutlineButton>Take Break</OutlineButton>
        </AgentActions>
        <AgentNav>
          <AgentNavItem>
            <Phone size={24} strokeWidth={1.8} />
          </AgentNavItem>
          <AgentNavItem>
            <ChatOutline />
          </AgentNavItem>
          <AgentNavItem>
            <Mail size={25} strokeWidth={1.8} />
          </AgentNavItem>
          <AgentNavItem $active>
            <PeopleSolid />
          </AgentNavItem>
          <AgentNavItem>
            <Info size={24} strokeWidth={1.8} />
          </AgentNavItem>
        </AgentNav>
      </AgentHeader>

      <SideTabStrip top={16} />
      <SideBox $h={324}>
        <SideSearch />
        <SideList>
          <ListHead>
            <HeadIcon>
              <PersonSolid />
            </HeadIcon>
            <span>Queue</span>
            <HeadCell>
              <QueueAgent />
            </HeadCell>
            <HeadCell>
              <PhoneClock />
            </HeadCell>
            <HeadCell>
              <Clock size={18} strokeWidth={1.5} />
            </HeadCell>
            <HeadStar>
              <Star size={16} fill="currentColor" strokeWidth={1} />
            </HeadStar>
          </ListHead>
          <ListBody>
            <ListRows>
              {queues.map((q) => (
                <React.Fragment key={q.group}>
                  <GroupRow>{q.group}</GroupRow>
                  <ListRow>
                    <RowIcon>
                      <PersonSolid />
                    </RowIcon>
                    <span>{q.name}</span>
                    <NumCell>0</NumCell>
                    <NumCell>0</NumCell>
                    <span>0m:00s</span>
                    <RowStar>
                      <Star size={16} strokeWidth={1.5} />
                    </RowStar>
                  </ListRow>
                </React.Fragment>
              ))}
            </ListRows>
            <VScroll>
              <VArrow $up />
              <VArrow />
            </VScroll>
          </ListBody>
        </SideList>
      </SideBox>

      <SideDivider />

      <SideTabStrip top={14} />
      <SideBox $h={322}>
        <SideSearch />
        <SideList>
          <ListHead $plain>
            <HeadIcon $pl={2}>
              <TeamAlert />
            </HeadIcon>
            <span>Name</span>
            <span />
            <span />
            <HeadCell $mr={14}>
              <Timer size={18} strokeWidth={1.5} />
            </HeadCell>
            <HeadStar>
              <Star size={16} fill="currentColor" strokeWidth={1} />
            </HeadStar>
          </ListHead>
          <ListBody>
            <ListRows>
              <GroupRow>US_SALES</GroupRow>
              <ListRow $selected>
                <RowIcon>
                  <StatusCheck size={11} />
                </RowIcon>
                <span>Jahmal Abbott</span>
              </ListRow>
              <ListRow>
                <RowIcon>
                  <StatusCheck size={11} />
                </RowIcon>
                <span>Nikki Jones</span>
              </ListRow>
            </ListRows>
            <VScroll>
              <VArrow $up />
              <VArrow />
            </VScroll>
          </ListBody>
          <Popover>
            <PopoverHead>
              <StatusCheck size={10} />
              Available
            </PopoverHead>
            <PopoverMenu>
              <PopoverItem>
                Jahmal Abbott
                <PopoverGlyph>
                  <Star size={16} strokeWidth={1.5} />
                </PopoverGlyph>
              </PopoverItem>
              <PopoverItem>
                Make a call
                <PopoverGlyph>
                  <PhoneSolid />
                </PopoverGlyph>
              </PopoverItem>
              <PopoverItem>
                Start a chat
                <PopoverGlyph>
                  <ChatSolid />
                </PopoverGlyph>
              </PopoverItem>
            </PopoverMenu>
          </Popover>
        </SideList>
      </SideBox>

      <StatusRow>
        Show Status in:
        <TinySelect>
          One Tab
          <ChevronDown size={13} strokeWidth={3} color="#222" />
        </TinySelect>
      </StatusRow>
      <PoweredRow>
        Powered by
        <EightByEight>8x8</EightByEight>
      </PoweredRow>
    </Sidecar>
  );
}

function ClassicCases() {
  return (
    <ClassicPane>
      <ClassicTabs>
        <ClassicTab>Cases</ClassicTab>
        <ClassicIcons>
          <ClassicCalendar />
          <ClassicPeople />
          <ClassicContact />
        </ClassicIcons>
      </ClassicTabs>
      <ClassicTitleRow>
        <ClassicTitle>Cases</ClassicTitle>
        <ClassicLink>
          <LinkIcon>
            <CirclePlus size={17} strokeWidth={1.3} />
          </LinkIcon>
          New Case
        </ClassicLink>
      </ClassicTitleRow>
      <ClassicFilters>
        <FiltersLabel>Filters</FiltersLabel>
        <ClassicSelect>
          Assigned to me
          <SolidCaret />
        </ClassicSelect>
        <ClassicButton $ml={24} $w={100} $h={24} $mt={-1}>
          Go
        </ClassicButton>
        <BlueLink $ml={24} $mt={-2} $size={12.5} $gap={9}>
          Search
          <ChevronDown size={14} strokeWidth={1.8} color="#555" />
        </BlueLink>
      </ClassicFilters>
      <ClassicPager>
        <Double>
          <DoubleArrow dir="left" />
        </Double>
        <Double $ml={13}>
          <SingleArrow dir="left" />
        </Double>
        <PagerText $ml={24}>Cases 0 - 0 of 0</PagerText>
        <PagerSelect>
          1
          <SolidCaret />
        </PagerSelect>
        <Double $ml={24}>
          <SingleArrow dir="right" />
        </Double>
        <Double $ml={14}>
          <DoubleArrow dir="right" />
        </Double>
      </ClassicPager>
      <ClassicTable>
        <ClassicHeadRow>
          <Check $ml={8} $color="#a9bcd2" />
          <span>#</span>
          <span>Last Updated</span>
          <span>Customer</span>
          <span>Customer Type</span>
          <span>Company</span>
          <ClipCell>Subject</ClipCell>
        </ClassicHeadRow>
        <NoItems>No items to show.</NoItems>
        <HScroll $h={17} $pl={7}>
          <Tri $left />
          <HThumb $w={340} $ml={4} />
          <Tri $mr={6} />
        </HScroll>
      </ClassicTable>
      <ClassicActions>
        <ClassicButton $ml={0} $w={125} $h={25}>
          Delete Selected
        </ClassicButton>
        <ClassicButton $ml={21} $w={100} $h={25}>
          Delete All
        </ClassicButton>
      </ClassicActions>
    </ClassicPane>
  );
}

export default function App() {
  return (
    <>
      <GlobalStyle />
      <Page>
        <Contacts />
        <Splitter>
          <Grip />
        </Splitter>
        <ModernCases />
        <Agent />
        <ClassicCases />
      </Page>
    </>
  );
}
